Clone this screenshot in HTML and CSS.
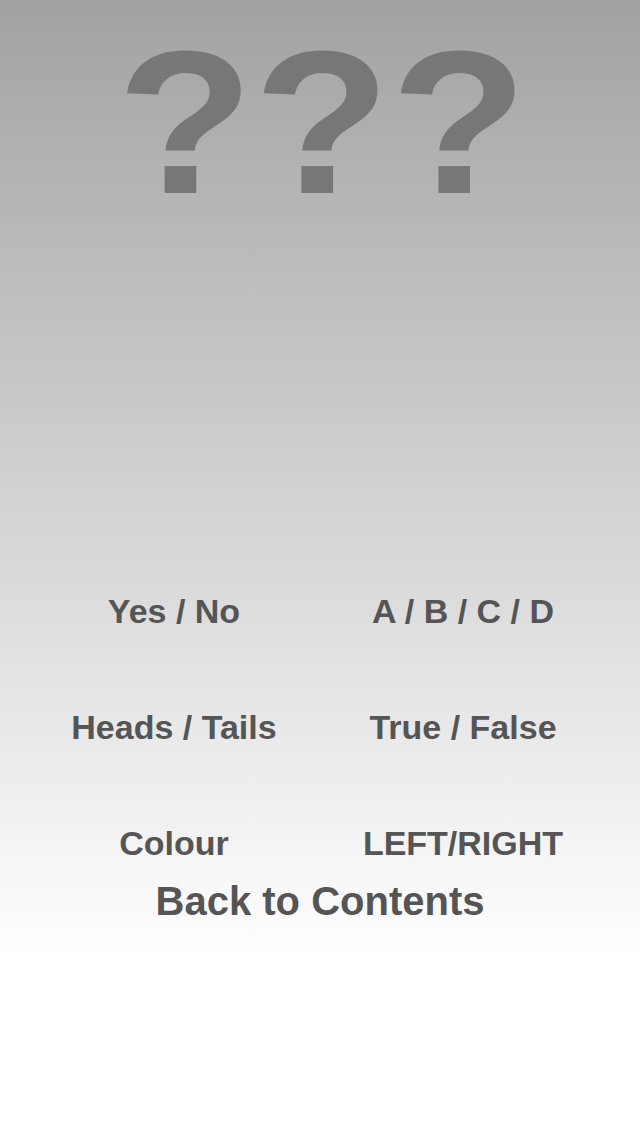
FILE: index.html
```html
<!DOCTYPE html>
<html>
<head>
<meta charset="utf-8">
<link rel="stylesheet" href="styles.css">
</head>
<body>
<div class="screen">
  <div class="title">???</div>
  <div class="spacer"></div>
  <div class="choices">
    <a class="choice">Yes / No</a>
    <a class="choice">A / B / C / D</a>
    <a class="choice">Heads / Tails</a>
    <a class="choice">True / False</a>
    <a class="choice">Colour</a>
    <a class="choice">LEFT/RIGHT</a>
  </div>
  <a class="back">Back to Contents</a>
</div>
</body>
</html>
```
FILE: styles.css
```css
html, body {
  margin: 0;
  padding: 0;
}
body {
  width: 640px;
  height: 1136px;
  overflow: hidden;
  font-family: "Liberation Sans", Arial, sans-serif;
}
.screen {
  height: 1136px;
  display: flex;
  flex-direction: column;
  background: linear-gradient(to bottom, #a2a2a2 0px, #ffffff 960px, #ffffff 1136px);
}
.title {
  padding-top: 10px;
  padding-left: 4px;
  height: 224px;
  font-size: 224px;
  line-height: 224px;
  font-weight: bold;
  color: #777777;
  text-align: center;
  transform: scaleY(0.915);
  transform-origin: 50% 119.5px;
}
.spacer {
  height: 357px;
}
.choices {
  display: grid;
  grid-template-columns: 288px 290px;
  padding-left: 30px;
  row-gap: 76px;
}
.choice {
  font-size: 34px;
  line-height: 40px;
  font-weight: bold;
  color: #555555;
  text-align: center;
}
.back {
  margin-top: 14px;
  font-size: 40px;
  line-height: 48px;
  font-weight: bold;
  color: #555555;
  text-align: center;
}
```
